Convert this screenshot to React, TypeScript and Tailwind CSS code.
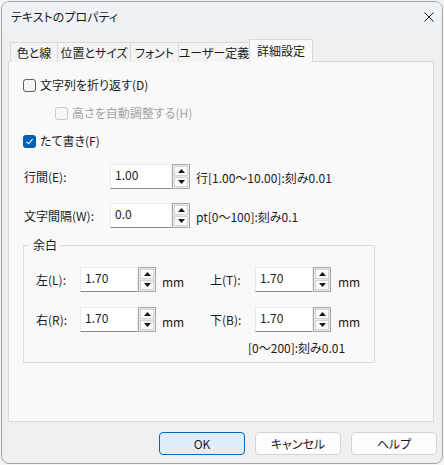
import React from "react";

const jp = "font-['Noto_Sans_CJK_JP','Noto_Sans',sans-serif] [font-feature-settings:'palt']";

function Check({ checked, disabled }: { checked?: boolean; disabled?: boolean }) {
  if (checked) {
    return (
      <div className="w-[13px] h-[13px] rounded-[3px] bg-[#005fb8] flex items-center justify-center">
        <svg width="9" height="9" viewBox="0 0 9 9">
          <path d="M1.5 4.8 L3.6 6.8 L7.6 2.2" fill="none" stroke="#ffffff" strokeWidth="1.1" />
        </svg>
      </div>
    );
  }
  return (
    <div
      className={
        disabled
          ? "w-[13px] h-[13px] rounded-[3px] border border-[#c9c9c9] bg-[#f7f7f7]"
          : "w-[13px] h-[13px] rounded-[3px] border border-[#5d5d5d] bg-[#f6f6f6]"
      }
    />
  );
}

function Tri({ up }: { up?: boolean }) {
  return (
    <svg width="7" height="4" viewBox="0 0 7 4">
      {up ? <path d="M0 4 L3.5 0 L7 4 Z" fill="#1a1a1a" /> : <path d="M0 0 L3.5 4 L7 0 Z" fill="#1a1a1a" />}
    </svg>
  );
}

function Spinner() {
  return (
    <div className="w-[18px] h-full flex flex-col border border-[#a9a9a9] bg-[#e9e9e9] p-px gap-px">
      <div className="flex-1 flex items-center justify-center bg-[#fbfbfb] border border-[#d4d4d4]">
        <Tri up />
      </div>
      <div className="flex-1 flex items-center justify-center bg-[#fbfbfb] border border-[#d4d4d4]">
        <Tri />
      </div>
    </div>
  );
}

function NumField({ value, wide }: { value: string; wide?: boolean }) {
  return (
    <div className="flex h-[25px]">
      <div
        className={
          (wide ? "w-[62px] " : "w-[58px] ") +
          "h-full bg-white border border-[#ececec] border-b-[#8a8a8a] pl-[4px] pt-[2px] text-[12px] leading-[16px] text-[#1b1b1b]"
        }
      >
        {value}
      </div>
      <Spinner />
    </div>
  );
}

function Tab({ label, w, active }: { label: string; w: string; active?: boolean }) {
  if (active) {
    return (
      <div
        className={
          w +
          " h-[23px] shrink-0 whitespace-nowrap -ml-px relative z-10 bg-[#f9f9f9] border border-b-0 border-[#d9d9d9] flex items-center justify-center pb-[1px]"
        }
      >
        {label}
      </div>
    );
  }
  return (
    <div
      className={
        w +
        " h-[20px] shrink-0 whitespace-nowrap -ml-px first:ml-0 bg-[#f3f3f3] border border-b-0 border-[#d9d9d9] flex items-center justify-center"
      }
    >
      {label}
    </div>
  );
}

function Button({ label, primary }: { label: string; primary?: boolean }) {
  return (
    <div
      className={
        primary
          ? "w-[86px] h-[23px] rounded-[4px] border border-[#0067c0] bg-[#e0eef9] flex items-center justify-center"
          : "w-[86px] h-[23px] rounded-[4px] border border-[#d3d3d3] bg-[#fdfdfd] flex items-center justify-center"
      }
    >
      {label}
    </div>
  );
}

export default function App() {
  return (
    <div className={"w-[444px] h-[465px] bg-[#f4f4f4] pt-px pl-px text-[12px] text-[#1b1b1b] " + jp}>
      <div className="w-[442px] h-[463px] rounded-[8px] border border-[#a3a3a3] bg-[#f0f0f0] overflow-hidden flex flex-col">
        {/* title bar */}
        <div className="h-[31px] bg-[#eef2f7] flex items-center justify-between pl-[9px] pr-[8px] shrink-0">
          <span className="text-[12px] leading-[16px] pb-[1px]">テキストのプロパティ</span>
          <svg width="10" height="10" viewBox="0 0 10 10" className="mb-[2px]">
            <path d="M0.5 0.5 L9.5 9.5 M9.5 0.5 L0.5 9.5" stroke="#1b1b1b" strokeWidth="1" />
          </svg>
        </div>

        {/* tabs */}
        <div className="flex items-end ml-[8px] mt-[6px] h-[23px] -mb-px relative">
          <Tab label="色と線" w="w-[48px]" />
          <Tab label="位置とサイズ" w="w-[74px]" />
          <Tab label="フォント" w="w-[49px]" />
          <Tab label="ユーザー定義" w="w-[72px]" />
          <Tab label="詳細設定" w="w-[64px]" active />
        </div>

        {/* page */}
        <div className="ml-[6px] w-[426px] h-[361px] bg-[#f9f9f9] border border-[#d9d9d9] pl-[14px] flex flex-col">
          <div className="mt-[13px] h-[20px] flex items-center">
            <Check />
            <span className="ml-[4px]">文字列を折り返す(D)</span>
          </div>
          <div className="mt-[8px] h-[20px] flex items-center pl-[32px]">
            <Check disabled />
            <span className="ml-[4px] text-[#a3a3a3]">高さを自動調整する(H)</span>
          </div>
          <div className="mt-[8px] h-[20px] flex items-center">
            <Check checked />
            <span className="ml-[4px]">たて書き(F)</span>
          </div>

          <div className="mt-[13px] h-[25px] flex items-center">
            <span className="w-[87px] pl-px">行間(E):</span>
            <NumField value="1.00" wide />
            <span className="ml-[6px] pt-[2px]">行[1.00～10.00]:刻み0.01</span>
          </div>
          <div className="mt-[14px] h-[25px] flex items-center">
            <span className="w-[87px] pl-px">文字間隔(W):</span>
            <NumField value="0.0" wide />
            <span className="ml-[6px] pt-[2px]">pt[0～100]:刻み0.1</span>
          </div>

          {/* margins group */}
          <div className="relative mt-[17px] w-[352px] h-[118px] border border-[#dcdcdc] pl-[12px] flex flex-col">
            <span className="absolute -top-[9px] left-[5px] px-[4px] bg-[#f9f9f9] leading-[16px]">余白</span>
            <div className="mt-[21px] flex h-[25px] items-center">
              <div className="w-[174px] flex items-center">
                <span className="w-[44px]">左(L):</span>
                <NumField value="1.70" />
                <span className="ml-[6px] pt-[5px]">mm</span>
              </div>
              <span className="w-[45px]">上(T):</span>
              <NumField value="1.70" />
              <span className="ml-[7px] pt-[5px]">mm</span>
            </div>
            <div className="mt-[15px] flex h-[25px] items-center">
              <div className="w-[174px] flex items-center">
                <span className="w-[44px]">右(R):</span>
                <NumField value="1.70" />
                <span className="ml-[6px] pt-[5px]">mm</span>
              </div>
              <span className="w-[45px]">下(B):</span>
              <NumField value="1.70" />
              <span className="ml-[7px] pt-[5px]">mm</span>
            </div>
            <div className="mt-[8px] pl-[212px] leading-[16px]">[0～200]:刻み0.01</div>
          </div>
        </div>

        {/* buttons */}
        <div className="flex justify-end gap-[10px] pr-[5px] mt-[10px]">
          <Button label="OK" primary />
          <Button label="キャンセル" />
          <Button label="ヘルプ" />
        </div>
      </div>
    </div>
  );
}
